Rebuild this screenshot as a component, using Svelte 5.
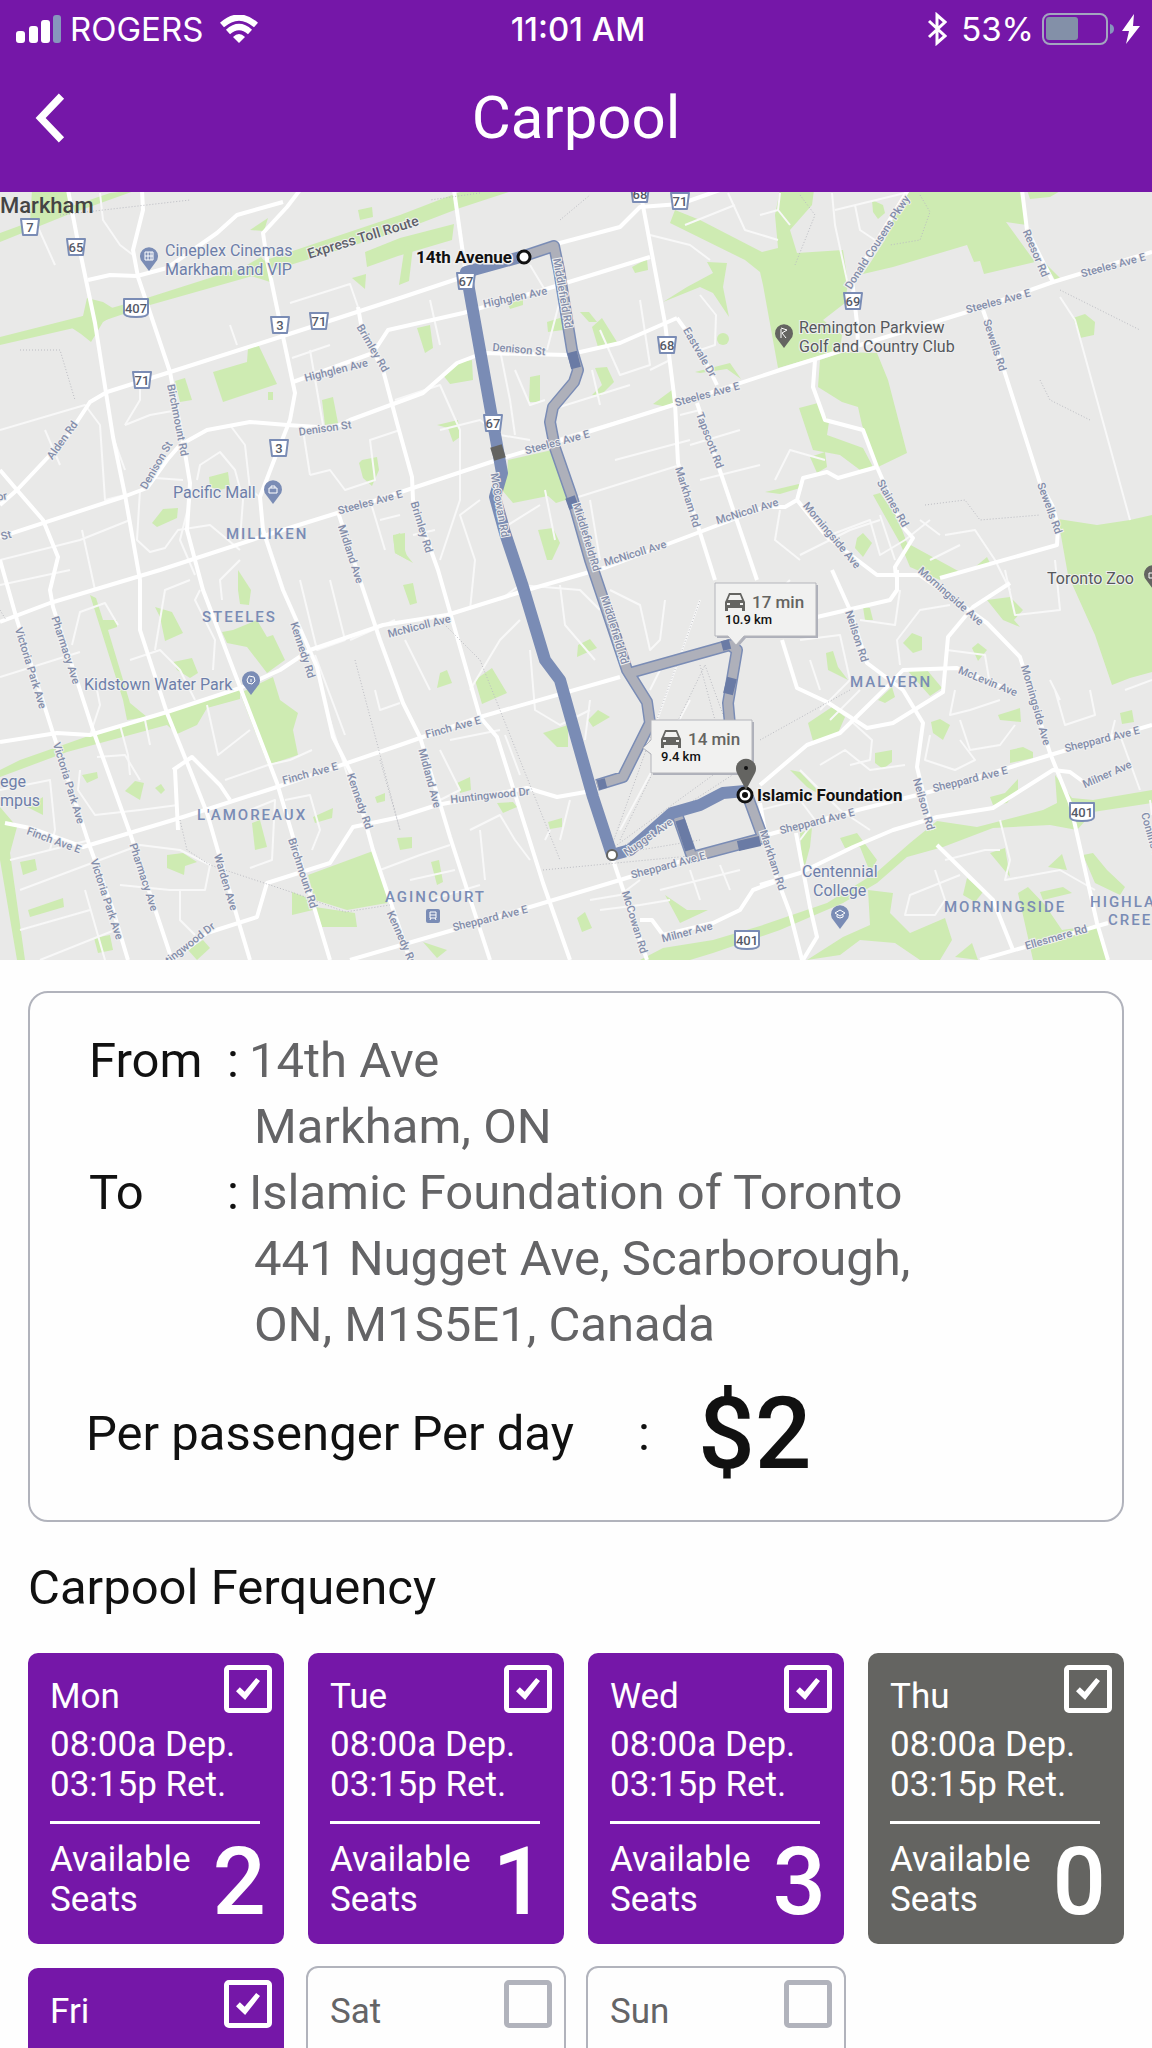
<script lang="ts">
  type Label = [text: string, x: number, y: number, angle: number]

  let days = $state([
    { name: 'Mon', checked: true, dep: '08:00a', ret: '03:15p', seats: 2 },
    { name: 'Tue', checked: true, dep: '08:00a', ret: '03:15p', seats: 1 },
    { name: 'Wed', checked: true, dep: '08:00a', ret: '03:15p', seats: 3 },
    { name: 'Thu', checked: true, dep: '08:00a', ret: '03:15p', seats: 0 },
    { name: 'Fri', checked: true },
    { name: 'Sat', checked: false },
    { name: 'Sun', checked: false }
  ])

  const stops = [
    { label: 'From', lines: ['14th Ave', 'Markham, ON'] },
    { label: 'To', lines: ['Islamic Foundation of Toronto', '441 Nugget Ave, Scarborough,', 'ON, M1S5E1, Canada'] }
  ]

  const parks = [
    'M0 233L30 222 32 190 67 190 69 207 110 193 137 190 67 215 0 242Z',
    'M0 337L87 315 150 297 260 262 400 215 465 190 515 190 460 208 400 231 274 270 150 305 100 322 0 345Z',
    'M87 298l16 4 16 10-16 10-12 20-10-8-12-8 14-10Z',
    'M247 265l14-8 12 14 0 12-12-4-20-6Z',
    'M365 252L400 238 454 224 452 240 398 256 367 267Z',
    'M405 245l8 2-4 34-10 4Z',
    'M213 372L247 362 248 348 258 344 277 384 223 402Z',
    'M175 381L185 378 192 400 180 402Z',
    'M268 392h5v8h-5Z',
    'M322 400L333 397 338 423 325 425Z',
    'M352 278L366 274 365 289Z',
    'M358 210L372 207 373 217 360 220Z',
    'M250 230L268 218 264 231Z',
    'M362 460L377 457 379 470 372 486 363 478 359 463Z',
    'M209 477L228 472 230 487 220 490 210 487Z',
    'M152 523L163 509 178 508 177 518 157 527Z',
    'M393 536L400 533 408 560 395 553Z',
    'M238 570L251 590 249 605 240 604 238 590Z',
    'M675 210L700 220 762 252 778 248 775 215 780 190 814 190 812 205 790 230 797 253 843 250 848 283 845 303 823 320 842 335 840 350 778 368 763 285 760 272 745 260 670 223Z',
    'M632 267L647 259 648 270 635 273Z',
    'M417 328L430 325 433 348 425 353Z',
    'M507 302L523 297 523 305 510 309Z',
    'M547 322L563 317 563 330 548 332Z',
    'M443 375L460 362 472 360 473 380 450 384Z',
    'M530 377L540 375 540 402 529 402Z',
    'M595 368L607 367 614 382 600 396 592 395 602 385Z',
    'M580 312l9 0 8 10-8 0Z',
    'M592 327L602 318 617 342 598 347Z',
    'M663 302L687 287 713 273 707 262 727 263 723 287 729 317 713 293 700 287Z',
    'M717 339a6 6 0 1 0 12 0a6 6 0 1 0-12 0Z',
    'M695 372L730 363 741 379 727 369 700 373Z',
    'M653 404L672 390 673 403 667 407Z',
    'M437 425L458 420 460 437 453 442 448 428Z',
    'M508 460L552 450 572 498 556 503 548 496 513 503 502 490 507 475Z',
    'M538 530L553 528 560 543 552 560 547 560Z',
    'M393 535L405 533 405 553 413 563 395 553Z',
    'M765 492L803 483 800 488 780 494Z',
    'M905 190L1020 190 1027 225 1006 222 1035 262 984 274 980 261 974 262 967 245 893 267 863 274 885 240Z',
    'M872 200L883 205 885 213 878 219 873 212Z',
    'M1027 190L1062 190 1050 197 1030 199Z',
    'M1045 263L1062 280 1055 280Z',
    'M1073 318L1085 314 1095 322 1094 335 1080 338Z',
    'M820 360L842 352 877 353 888 380 907 453 878 467 862 425 858 407 842 402 818 387Z',
    'M799 408L818 403 829 422 827 435 863 448 873 467 860 470 840 455 813 450Z',
    'M810 457L825 452 827 467 817 473Z',
    'M873 495L880 493 897 517 907 543 960 572 940 580 910 567 900 543Z',
    'M857 538L863 533 872 543 863 557 855 548Z',
    'M975 567L987 557 990 563Z',
    'M1058 519L1097 525 1130 520 1152 515 1152 672 1130 678 1112 685 1095 635 1068 575Z',
    'M987 600L1010 597 1023 610 1014 620 1020 627 1003 620Z',
    'M863 607L870 608 873 620 865 620Z',
    'M903 643L912 633 922 637 922 650 913 653Z',
    'M972 648L978 643 987 650 978 661Z',
    'M826 653L833 651 838 667 848 680 828 670Z',
    'M907 670L927 670 942 688 930 696Z',
    'M878 700L892 687 895 697 885 703Z',
    'M808 723L832 707 845 717 838 733 813 741Z',
    'M931 722L940 719 950 725 943 740 933 733Z',
    'M998 715L1020 708 1021 722 1000 720Z',
    'M875 753L892 750 892 762 883 769 875 763Z',
    'M1010 750L1023 747 1033 752 1033 758 1010 763Z',
    'M1120 713L1132 710 1134 722 1122 724Z',
    'M790 770L800 772 824 797 807 787Z',
    'M990 797L1005 793 1018 779 1018 790 1007 803 993 805Z',
    'M640 960L663 948 713 940 760 926 827 903 877 872 910 843 937 821 977 827 1043 810 1057 803 1055 775 1072 798 1093 800 1152 790 1152 803 1093 812 1077 830 1050 825 993 828 943 847 907 857 877 883 843 903 780 930 713 953 690 960Z',
    'M990 853L1005 848 1010 877Z',
    'M1048 867L1062 854 1067 870Z',
    'M1083 855L1093 853 1107 870 1125 887 1120 895 1095 883Z',
    'M963 895L967 878 983 892 975 902Z',
    'M1018 893L1028 887 1045 905 1062 930 1097 925 1107 960 1033 960Z',
    'M1040 892L1063 887 1072 893 1043 900Z',
    'M807 960L843 937 870 925 868 890 893 893 890 913 910 933 945 918 952 940 940 960 920 960 895 943 860 940 840 955Z',
    'M955 957L972 943 978 960Z',
    'M800 833L812 828 810 847 803 873Z',
    'M840 838L857 833 877 860 870 872 860 847 845 848Z',
    'M90 595L96 598 103 620 117 620 117 627 108 630 130 703 147 717 127 720 123 700Z',
    'M155 607L172 612 183 633 165 641 160 617Z',
    'M173 662L192 658 198 673 190 678 177 670Z',
    'M222 632L233 630 257 620 267 637 273 635 285 660 267 673 247 647 227 643Z',
    'M240 693L273 677 280 700 298 713 293 730 298 755 268 765Z',
    'M0 770L20 760 97 733 240 689 240 699 207 708 197 725 177 734 167 725 67 752 0 777Z',
    'M82 775L97 772 98 778 87 783Z',
    'M125 791L135 781 144 783 140 800Z',
    'M155 788l6-4 4 6-4 4Z',
    'M313 817L333 808 332 818 315 823Z',
    'M252 823L260 820 267 847 255 850Z',
    'M375 797L385 793 385 801 377 803Z',
    'M308 875L373 851 388 893 387 903 347 910 315 900Z',
    'M292 892L308 898 313 910 292 915Z',
    'M315 907L355 913 357 927 322 927Z',
    'M167 855L183 853 197 862 185 866 184 875 167 868Z',
    'M20 862L35 859 37 870 23 875Z',
    'M28 910L63 898 64 907 30 917Z',
    'M94 938L110 935 113 950 98 953Z',
    'M0 807L17 827 10 853 25 960 17 960 0 860Z',
    'M188 950L203 940 210 948 197 960Z',
    'M27 807L43 797 43 815Z',
    'M403 585L413 583 417 603 410 605Z',
    'M578 645L590 639 597 648 577 657Z',
    'M440 673L447 670 452 683 437 688Z',
    'M475 680L492 668 507 693 482 704Z',
    'M588 720L598 710 610 717 593 727Z',
    'M543 733L568 725 568 747 557 747Z',
    'M457 783L470 777 471 790 460 793Z',
    'M497 803L513 802 517 807 503 813Z',
    'M548 822L562 818 562 827 550 829Z',
    'M397 838L412 837 412 848 400 850Z',
    'M431 862L439 860 443 882 437 885Z',
    'M577 918L585 912 592 928 582 932Z',
    'M665 895L687 910 708 910 680 923Z',
    'M423 942L447 950 437 958Z'
  ]

  const majorRoads = [
    'M68 190L77 237 95 323 113 437 125 495 140 580 140 630 167 713 190 770 207 813 238 920 250 960',
    'M142 190L143 210 133 250 138 277 170 372 185 453 190 483 187 530 203 590 240 687 277 783 293 837 330 960',
    'M300 190L287 207 263 233 267 260 278 313 295 393 290 420 273 463 260 497 263 530 283 590 317 667 333 737 353 777 373 850 400 930 410 960',
    'M0 537L123 497 147 488 167 460 180 445 207 430 250 422 287 425 333 428 350 420 423 393 457 363 483 353 567 355 620 343 677 318',
    'M0 622L50 603 160 570 273 533 347 510 503 458 553 443 673 405 780 370 860 345 980 308 1053 282 1152 252',
    'M17 490L67 437 90 402 107 392 167 373 280 337 400 298 460 278 560 243 620 227 640 207 680 204 720 190',
    'M88 280L110 275 137 276 167 268 217 233 237 215 283 202',
    'M0 470L17 490 43 520 58 557 50 590 53 607 93 730 130 833 153 903 172 960',
    'M0 505L17 490',
    'M0 560L17 620 53 733 90 847 113 910 128 960',
    'M358 307L362 330 383 370 397 423 412 477 413 500 438 570 480 717 497 737 543 883 570 960',
    'M338 512L360 580 380 640 403 703 420 737 450 837 490 960',
    'M293 382L373 353 388 330 463 313 543 290 650 257',
    'M0 742L57 733 90 735 167 712 240 688 280 670 310 650 383 625 447 615 527 590 607 567 713 527 765 507 785 507 797 500 803 478 827 472 838 478 877 467',
    'M5 823L30 828 83 847 183 817 277 787 400 745 480 717 620 677',
    'M817 617L890 600 897 590 897 570',
    'M173 960L207 933 257 917 267 883 330 863 353 827 400 817 437 805 527 788 557 797 597 790',
    'M350 960L460 928 620 880 760 837 850 812 937 790 1050 755 1152 725',
    'M454 190L466 275',
    'M640 190L665 323 675 403 678 463 715 580',
    'M782 640L797 688 827 702 867 728 893 723 943 692 948 637 973 607 1010 583',
    'M760 803L770 860 790 913 802 960',
    'M677 318L700 350 717 385M697 403L757 580',
    'M815 360L813 387 825 420 863 430 877 467 887 490 903 527 913 538 895 567 896 577',
    'M797 500L827 537 877 575 920 575 987 623 1020 657 1050 753 1070 803 1097 923 1108 960',
    'M940 578L1057 545 1058 527 1053 507 1040 483 1003 367 983 310',
    'M1022 190L1027 230 1053 282',
    'M908 190L873 247 852 280 857 323 858 345',
    'M832 570L850 610 867 663 903 690 923 723 917 767 932 830M937 845L993 900 1013 950',
    'M760 785L807 745 840 733 887 687 903 670 957 668 1010 690',
    'M760 885L800 873 853 847 893 830 937 817 993 808 1053 770 1070 772 1085 783',
    'M640 920L652 920 663 935 713 923 740 910 753 890 780 880',
    'M613 860L647 960',
    'M980 960L1108 923',
    'M796 833L810 907 817 937 803 960',
    'M173 770L192 757 220 785 230 800M175 770L178 830'
  ]

  const minorRoads = [
    'M100 193L103 220 120 245 133 255M37 225L55 265',
    'M0 430L85 405 100 425 105 500 125 495M125 425L150 415 178 410',
    'M290 303L350 284 358 307M292 358L330 345M323 425L310 350M230 325L237 345',
    'M60 465L45 430M125 470L113 437M140 370L140 400 125 425',
    'M0 560L80 540 130 520M82 530L95 590M155 478L183 480M140 490L137 540 150 552 165 548 178 530 210 525 240 550',
    'M197 480L200 465 220 452 235 470 243 500 240 540M230 425L245 445 250 490 260 497',
    'M310 475L330 470 345 490 375 480 370 440 400 430M303 430L310 475M340 510L370 500 385 550',
    'M0 585L70 570M0 677L80 652M72 645L80 612 105 603 118 625M155 650L165 590 190 580',
    'M190 500L180 540 195 575M200 590L195 600 215 640 213 670M130 660L160 650 180 670 195 700',
    'M240 560L220 580 222 600M300 580L317 650 345 640 330 580M350 640L395 620',
    'M375 690L380 710 400 703M330 720L355 800M315 655L345 735',
    'M90 735L100 705 97 690M145 720L150 745M120 725L128 755 130 775',
    'M80 770L78 790 95 815 140 810 178 805M97 757L125 755 140 780M207 705L218 755 250 730',
    'M225 780L268 765 290 760 312 750M285 800L310 795 320 830 312 850',
    'M0 790L50 780 55 830 50 850M10 860L90 840M20 890L100 860 140 845 180 850 210 865 205 890 170 890 120 885',
    'M20 930L90 910M40 960L115 930M85 890L105 960M180 890L180 920 195 935M250 810L275 800 272 860 250 868',
    'M395 400L440 385 460 430 460 500 440 560M430 300L440 345M500 350L510 400 515 435',
    'M440 430L480 420 500 435 530 440M515 370L530 405 545 400M550 410L630 385M600 405L592 370',
    'M480 500L460 515 475 560 470 610M500 530L540 505M545 490L555 540M590 500L600 560',
    'M380 520L400 515M413 535L435 530M555 440L640 415M615 460L690 440',
    'M600 330L620 375 650 365 640 300M530 265L545 290M560 300L547 350',
    'M650 235L690 245 710 260M700 295L716 315 715 345 700 350M650 370L670 360M680 415L700 410',
    'M728 193L745 230 778 240M685 225L735 205M760 215L778 210M780 193L778 210 790 225',
    'M832 193L835 225 848 285M835 210L905 193M855 205L860 230 875 240',
    'M775 480L790 450 825 460M780 510L775 540 800 560M800 555L850 530 880 520M880 515L895 560',
    'M830 535L870 520 880 555 905 540 930 520M945 535L975 530 995 560 1010 590M920 520L940 535',
    'M930 560L960 545M790 580L770 600M1005 570L1015 615 1060 610 1055 560',
    'M800 640L840 635 850 680M810 660L820 690M860 620L895 625 900 590M900 665L897 640 920 610 950 605',
    'M947 650L985 655 990 685M955 690L950 715 970 710 1000 700M960 720L970 750 1000 745 1015 725',
    'M820 710L850 680M830 720L860 690M850 720L872 740 870 760 850 765M930 735L925 760 955 770 975 760 960 740',
    'M1055 690L1065 725 1095 715 1090 690M1060 700L1050 680M1110 740L1115 720M1120 735L1140 790M1125 690L1152 680',
    'M1150 800L1152 815M1000 820L1010 860 1005 880 1060 870 1095 890M945 860L985 850 1000 850M960 875L910 895 905 915 935 915 945 900 935 870',
    'M500 600L520 585 580 590 600 610M560 585L565 625 595 660M530 650L535 710 560 725 590 710',
    'M585 740L590 700M470 690L500 640 520 620M405 640L430 690M450 740L500 730M505 735L520 775',
    'M610 590L640 605 650 650 660 640 665 600M650 690L665 660',
    'M440 750L460 790 440 800M470 830L500 815 515 840 530 860M545 840L550 830M480 830L485 880M570 800L560 840',
    'M380 870L420 855 450 845M410 880L455 870M430 900L480 885M590 900L620 895 640 880M600 910L640 905 670 900',
    'M650 740L700 600M620 830L690 700M690 870L700 900M720 865L730 890M660 890L740 870',
    'M760 810L800 800 815 820 800 840M800 770L840 810 870 830M820 765L845 750 870 770 905 765',
    'M700 480L760 465M740 430L690 445M575 498L677 466M1060 297L1075 320 1130 520'
  ]

  const roadLabels: Label[] = [
    ['Brimley Rd', 373, 348, 60],
    ['Highglen Ave', 336, 370, -14],
    ['Birchmount Rd', 178, 420, 79],
    ['Alden Rd', 62, 440, -54],
    ['Denison St', 156, 465, -60],
    ['Denison St', 325, 428, -8],
    ['Steeles Ave E', 370, 502, -15],
    ['Midland Ave', 351, 554, 72],
    ['St', 6, 535, -15],
    ['or', 2, 496, -10],
    ['Highglen Ave', 515, 297, -12],
    ['Denison St', 519, 349, 5],
    ['Steeles Ave E', 557, 442, -15],
    ['Steeles Ave E', 707, 394, -15],
    ['Eastvale Dr', 700, 352, 60],
    ['Tapscott Rd', 710, 440, 69],
    ['Markham Rd', 688, 497, 73],
    ['McNicoll Ave', 635, 553, -17],
    ['McNicoll Ave', 747, 511, -17],
    ['Brimley Rd', 422, 527, 73],
    ['Middlefield Rd', 563, 293, 80],
    ['Middlefield Rd', 587, 537, 73],
    ['Middlefield Rd', 615, 630, 73],
    ['McCowan Rd', 500, 505, 80],
    ['Donald Cousens Pkwy', 877, 242, -57],
    ['Reesor Rd', 1036, 253, 67],
    ['Steeles Ave E', 998, 301, -15],
    ['Steeles Ave E', 1113, 265, -15],
    ['Sewells Rd', 995, 345, 72],
    ['Sewells Rd', 1050, 508, 70],
    ['Staines Rd', 893, 503, 60],
    ['Morningside Ave', 832, 535, 50],
    ['Morningside Ave', 951, 596, 41],
    ['Pharmacy Ave', 66, 650, 72],
    ['Pharmacy Ave', 144, 877, 72],
    ['Victoria Park Ave', 31, 668, 73],
    ['Victoria Park Ave', 69, 783, 73],
    ['Victoria Park Ave', 107, 899, 72],
    ['Kennedy Rd', 303, 650, 72],
    ['Kennedy Rd', 360, 801, 71],
    ['Kennedy Rd', 402, 938, 66],
    ['Finch Ave E', 310, 773, -15],
    ['Finch Ave E', 54, 840, 20],
    ['Warden Ave', 226, 882, 73],
    ['Birchmount Rd', 303, 873, 72],
    ['Huntingwood Dr', 182, 949, -38],
    ['McNicoll Ave', 419, 626, -14],
    ['Finch Ave E', 453, 727, -15],
    ['Midland Ave', 430, 778, 75],
    ['Huntingwood Dr', 490, 795, -6],
    ['Sheppard Ave E', 490, 918, -14],
    ['Sheppard Ave E', 668, 865, -15],
    ['McCowan Rd', 635, 922, 73],
    ['Milner Ave', 687, 932, -15],
    ['Nugget Ave', 648, 837, -35],
    ['Markham Rd', 773, 860, 72],
    ['Neilson Rd', 857, 636, 72],
    ['Neilson Rd', 924, 804, 74],
    ['Morningside Ave', 1036, 705, 74],
    ['McLevin Ave', 988, 681, 22],
    ['Sheppard Ave E', 1102, 739, -14],
    ['Sheppard Ave E', 970, 779, -14],
    ['Sheppard Ave E', 817, 821, -14],
    ['Milner Ave', 1107, 774, -24],
    ['Ellesmere Rd', 1056, 937, -16],
    ['Conlins Rd', 1152, 838, 74]
  ]

  const districts = [
    { text: 'MILLIKEN', x: 226, y: 539 },
    { text: 'STEELES', x: 202, y: 622 },
    { text: 'L\'AMOREAUX', x: 197, y: 820 },
    { text: 'AGINCOURT', x: 385, y: 902 },
    { text: 'MALVERN', x: 850, y: 687 },
    { text: 'MORNINGSIDE', x: 944, y: 912 },
    { text: 'HIGHLAND', x: 1090, y: 907 },
    { text: 'CREEK', x: 1108, y: 925 }
  ]

  const places = [
    { lines: ['Cineplex Cinemas', 'Markham and VIP'], x: 165, y: 256 },
    { lines: ['Pacific Mall'], x: 173, y: 498 },
    { lines: ['Kidstown Water Park'], x: 84, y: 690 },
    { lines: ['ege', 'mpus'], x: 0, y: 787 },
    { lines: ['Centennial'], x: 802, y: 877 },
    { lines: ['College'], x: 813, y: 896 },
    { lines: ['Remington Parkview', 'Golf and Country Club'], x: 799, y: 333, dark: true },
    { lines: ['Toronto Zoo'], x: 1047, y: 584, dark: true }
  ]

  const pins = [
    { x: 149, y: 256, glyph: 'M-4-4h8v8h-8zM-1-4v8M2-4v8M-4 0h8' },
    { x: 273, y: 489, glyph: 'M-4-1h8v5h-8zM-2-1v-2h4v2' },
    { x: 251, y: 680, glyph: 'M-4 0L-2-4 3-3 4 1 1 4-3 3ZM0-1v3' },
    { x: 840, y: 914, glyph: 'M-5-1L0-4 5-1 0 2ZM-3 1v2l3 1 3-1v-2' },
    { x: 784, y: 333, glyph: 'M-3-5L3-3-2 0 2 5M-3 5V-4', dark: true },
    { x: 1153, y: 574, glyph: 'M-4-1h8v5h-8z', dark: true }
  ]

  const shields = [
    { text: '7', x: 30, y: 227 },
    { text: '65', x: 76, y: 247 },
    { text: '407', x: 136, y: 308, wide: true },
    { text: '3', x: 280, y: 325 },
    { text: '71', x: 319, y: 321 },
    { text: '71', x: 142, y: 380 },
    { text: '3', x: 279, y: 448 },
    { text: '68', x: 640, y: 194 },
    { text: '71', x: 680, y: 201 },
    { text: '67', x: 466, y: 281 },
    { text: '67', x: 493, y: 423 },
    { text: '68', x: 667, y: 345 },
    { text: '69', x: 853, y: 301 },
    { text: '401', x: 747, y: 940, wide: true },
    { text: '401', x: 1082, y: 812, wide: true }
  ]

  const routes = [
    { x: 715, y: 583, time: '17 min', distance: '10.9 km', tip: 'M0 0H101V53H29L21 62 13 53H0Z' },
    { x: 651, y: 720, time: '14 min', distance: '9.4 km', tip: 'M0 0H101V53H0V34L-8 28 0 20Z' }
  ]
</script>

<div class="screen">
  <header>
    <div class="status">
      <div class="status-side">
        <svg class="signal" viewBox="0 0 46 28">
          <rect x="0" y="16" width="9" height="12" rx="3" />
          <rect x="13" y="11" width="9" height="17" rx="3" />
          <rect x="25" y="5" width="9" height="23" rx="3" />
          <rect class="dim" x="37" y="0" width="8" height="28" rx="3" />
        </svg>
        <span class="carrier">ROGERS</span>
        <svg class="wifi" viewBox="0 0 40 28">
          <path d="M3 10Q20-5 37 10M9 17Q20 7 31 17" />
          <path class="solid" d="M20 28L14 22Q20 16 26 22Z" />
        </svg>
      </div>
      <span class="clock">11:01 AM</span>
      <div class="status-side right">
        <svg class="bluetooth" viewBox="0 0 20 34">
          <path d="M2 9L18 24 10 31V3L18 10 2 25" />
        </svg>
        <span>53%</span>
        <svg class="battery" viewBox="0 0 72 32">
          <rect class="shell" x="1" y="1" width="64" height="30" rx="7" />
          <rect class="level" x="4" y="4" width="32" height="23" rx="3" />
          <path class="nub" d="M68 11Q72 12 72 16T68 21Z" />
        </svg>
        <svg class="bolt" viewBox="0 0 18 30">
          <path d="M12 0L0 17H7L4 30 18 12H11Z" />
        </svg>
      </div>
    </div>
    <div class="nav">
      <button class="back" aria-label="Back">
        <svg viewBox="0 0 28 48"><path d="M25 3L5 24 25 45" /></svg>
      </button>
      <h1>Carpool</h1>
    </div>
  </header>

  <svg class="map" viewBox="0 192 1152 768" role="img" aria-label="Route map">
    <rect class="land" x="0" y="190" width="1152" height="780" />
    {#each parks as d}
      <path class="park" {d} />
    {/each}
    {#each minorRoads as d}
      <path class="minor" {d} />
    {/each}
    {#each majorRoads as d}
      <path class="major" {d} />
    {/each}

    <g class="rail">
      <path d="M0 610L6 620M355 660L400 830M440 620L480 660 560 860M380 760L400 830M543 870L700 855M700 840L610 855" />
      <path d="M612 845L700 600M620 840L705 665M700 665L715 720M705 665L725 720M610 850L720 770M625 845L740 770M760 740L850 690M1060 290L1140 330" />
      <path d="M180 820L187 850 210 865 300 895 345 912 390 905M1040 380L1050 400 1090 420M925 505L965 500 980 520 1040 515" />
      <path d="M480 193L430 200M560 220L590 195M60 215L190 200M20 350L60 350 75 400M800 195L815 215 795 265M920 195L930 212 920 240 890 245" />
    </g>

    <g class="alt-route">
      {#each ['edge', 'fill'] as layer}
        <path class={layer} d="M524 256L554 246 559 270 572 350 578 370 574 382 553 407 550 422 555 448 572 497 590 560 627 670 647 702 650 723 623 777 597 785" />
        <path class={layer} d="M630 673L730 645 737 650 728 703 730 725M748 797L763 838 692 857 678 817" />
      {/each}
    </g>
    <path class="alt-dark" d="M732 678L728 694M760 841L738 846M680 820L690 850M570 497L574 508M572 352L576 368M598 785L606 783M722 646L730 644" />
    <path class="route" d="M524 256L466 272 493 423 502 473 495 497 505 533 523 587 545 660 560 680 593 797 612 855 630 850 672 813 700 805 723 793 745 791" />
    <path class="closure" d="M496 446L500 459" />

    {#each roadLabels as [text, x, y, angle]}
      <text class="road-label" transform="translate({x} {y}) rotate({angle})" dy="4">{text}</text>
    {/each}
    <text class="toll" transform="translate(363 237) rotate(-17)" dy="5">Express Toll Route</text>

    {#each districts as { text, x, y }}
      <text class="district" {x} {y}>{text}</text>
    {/each}
    <text class="city" x="0" y="213">Markham</text>

    {#each pins as { x, y, glyph, dark }}
      <g class="pin" class:dark transform="translate({x} {y})">
        <path class="drop" d="M0 15L-6 7A9 9 0 1 1 6 7Z" />
        <path class="glyph" d={glyph} />
      </g>
    {/each}
    {#each places as { lines, x, y, dark }}
      {#each lines as line, i}
        <text class="place" class:dark {x} y={y + i * 19}>{line}</text>
      {/each}
    {/each}

    <g class="station" transform="translate(426 909)">
      <rect width="14" height="14" rx="2" />
      <path d="M4 3h6v6H4zM4 6h6M4 11l1-2M10 11L9 9" />
    </g>

    {#each shields as { text, x, y, wide }}
      <g class="shield" transform="translate({x} {y})">
        <path d={wide ? 'M-12-9H12V5Q12 9 0 9T-12 5Z' : 'M-9-8H9L7 8H-7Z'} />
        <text dy="5">{text}</text>
      </g>
    {/each}

    {#each routes as { x, y, time, distance, tip }}
      <g class="bubble" transform="translate({x} {y})">
        <path class="shadow" d={tip} transform="translate(2 2)" />
        <path class="box" d={tip} />
        <path class="car" d="M14 10H26L29 17 30 19V28H27V25H13V28H10V19L11 17ZM15 12L13 17H27L25 12ZM12 20V22H15V20ZM25 20V22H28V20Z" />
        <text class="time" x="37" y="25">{time}</text>
        <text class="distance" x="10" y="41">{distance}</text>
      </g>
    {/each}

    <circle class="waypoint" cx="612" cy="855" r="5" />
    <circle class="stop" cx="524" cy="257" r="6" />
    <circle class="stop" cx="745" cy="795" r="7" />
    <circle cx="745" cy="795" r="3" />
    <path class="destination" d="M746 790L737 773A10 10 0 1 1 755 773Z" />
    <circle cx="746" cy="768" r="2" />
    <text class="stop-label" x="416" y="263">14th Avenue</text>
    <text class="stop-label" x="757" y="801">Islamic Foundation</text>
  </svg>

  <main>
    <section class="trip">
      <dl>
        {#each stops as stop}
          <dt>{stop.label}</dt>
          <dd>
            <span>:</span>
            <div>
              {#each stop.lines as line}
                <p>{line}</p>
              {/each}
            </div>
          </dd>
        {/each}
      </dl>
      <div class="price">
        <span class="price-label">Per passenger Per day</span>
        <span class="colon">:</span>
        <strong>$2</strong>
      </div>
    </section>

    <h2>Carpool Ferquency</h2>

    <div class="days">
      {#each days as day}
        <article class="day" class:off={!day.checked} class:full={day.seats === 0}>
          <label>
            <span>{day.name}</span>
            <input type="checkbox" bind:checked={day.checked}>
          </label>
          {#if day.dep}
            <p>{day.dep} Dep.<br>{day.ret} Ret.</p>
            <hr>
            <div class="seats">
              <p>Available<br>Seats</p>
              <b>{day.seats}</b>
            </div>
          {/if}
        </article>
      {/each}
    </div>
  </main>
</div>

<style>
  :global(body) {
    margin: 0;
    background: #fefefe;
  }

  .screen {
    height: 100vh;
    overflow: hidden;
    font-family: Roboto, "Liberation Sans", sans-serif;
    color: #111;
    background: #fefefe;
  }

  header {
    padding-bottom: 28px;
    background: #7517a8;
    color: #fff;
  }

  .status {
    display: grid;
    grid-template-columns: 1fr auto 1fr;
    align-items: center;
    height: 58px;
    padding: 0 12px 0 16px;
    font: 33px Inter, "Liberation Sans", sans-serif;
  }

  .status-side {
    display: flex;
    align-items: center;
    gap: 8px;
  }

  .right {
    justify-content: flex-end;
  }

  .clock {
    font-weight: 500;
  }

  .signal {
    width: 46px;
    height: 28px;
    fill: #fff;
  }

  .signal .dim {
    fill: #8796bd;
  }

  .wifi {
    width: 40px;
    height: 28px;
    margin-left: 8px;
    fill: none;
    stroke: #fff;
    stroke-width: 6;
  }

  .wifi .solid {
    fill: #fff;
    stroke: none;
  }

  .bluetooth {
    width: 20px;
    height: 34px;
    margin-right: 6px;
    fill: none;
    stroke: #fff;
    stroke-width: 3;
  }

  .battery {
    width: 72px;
    height: 32px;
  }

  .shell {
    fill: none;
    stroke: #a3a6bf;
    stroke-width: 2;
  }

  .level {
    fill: #8390a8;
  }

  .nub {
    fill: #8796bd;
  }

  .bolt {
    width: 18px;
    height: 30px;
    fill: #fff;
  }

  .nav {
    display: grid;
    grid-template-columns: 1fr auto 1fr;
    align-items: center;
    height: 106px;
    padding: 14px 34px 0;
    box-sizing: border-box;
  }

  .back {
    display: flex;
    justify-self: start;
    padding: 0;
    border: 0;
    background: none;
  }

  .back svg {
    width: 32px;
    height: 50px;
    fill: none;
    stroke: #fff;
    stroke-width: 7;
  }

  h1 {
    margin: 0;
    font-size: 60px;
    line-height: 64px;
    font-weight: 400;
  }

  .map {
    display: block;
    width: 100%;
    fill: #111;
  }

  .land {
    fill: #e9e9e8;
  }

  .park {
    fill: #ceebb2;
  }

  .major,
  .minor,
  .rail {
    fill: none;
    stroke: #fff;
    stroke-width: 4;
    stroke-linejoin: round;
  }

  .minor {
    stroke: #f8f8f8;
    stroke-width: 2;
  }

  .rail {
    stroke: #bbbcc2;
    stroke-width: 1;
    stroke-dasharray: 1 2;
  }

  .alt-route path,
  .alt-dark,
  .route,
  .closure {
    fill: none;
    stroke: #7a8cb5;
    stroke-width: 12;
    stroke-linejoin: round;
  }

  .alt-route .fill {
    stroke: #aeb0ba;
    stroke-width: 9;
  }

  .alt-dark {
    stroke: #6a7ba5;
    stroke-width: 10;
  }

  .closure {
    stroke: #646461;
  }

  .road-label,
  .toll {
    font-size: 11px;
    font-weight: 500;
    text-anchor: middle;
    fill: #838daa;
    stroke: #f0f0f0;
    stroke-width: 2;
    paint-order: stroke;
  }

  .toll {
    font-size: 14px;
    fill: #5d6069;
  }

  .district {
    font-size: 15px;
    font-weight: 500;
    letter-spacing: 2px;
    fill: #7a8cb5;
  }

  .city {
    font-size: 22px;
    font-weight: 500;
    fill: #444;
  }

  .place {
    font-size: 16px;
    fill: #6d7ea9;
    stroke: #f0f0f0;
    stroke-width: 2;
    paint-order: stroke;
  }

  .place.dark {
    fill: #55585c;
  }

  .drop {
    fill: #7a8cb5;
  }

  .dark .drop,
  .destination {
    fill: #646461;
  }

  .glyph {
    fill: none;
    stroke: #fff;
    stroke-width: 1;
  }

  .station rect {
    fill: #7a8cb5;
  }

  .station path {
    fill: none;
    stroke: #fff;
  }

  .shield path {
    fill: #fff;
    stroke: #7a8cb5;
    stroke-width: 2;
    stroke-linejoin: round;
  }

  .shield text {
    font-size: 13px;
    font-weight: 500;
    text-anchor: middle;
    fill: #555a68;
  }

  .shadow {
    fill: #aeb0ba;
  }

  .box {
    fill: #f1f1f0;
    stroke: #b4b5bb;
  }

  .car {
    fill: #646461;
    fill-rule: evenodd;
  }

  .time {
    font-size: 17px;
    font-weight: 500;
    fill: #646461;
  }

  .distance {
    font-size: 13px;
    font-weight: 500;
  }

  .waypoint {
    fill: #fff;
    stroke: #646461;
    stroke-width: 2;
  }

  .stop {
    fill: #fff;
    stroke: #111;
    stroke-width: 3;
  }

  .stop-label {
    font-size: 17px;
    font-weight: 700;
    stroke: #f0f0f0;
    stroke-width: 3;
    paint-order: stroke;
  }

  main {
    padding: 31px 28px 0;
  }

  p {
    margin: 0;
  }

  .trip {
    padding: 35px 56px 20px;
    border: 2px solid #b1b3bc;
    border-radius: 20px;
    font-size: 49px;
    line-height: 66px;
  }

  dl {
    display: grid;
    grid-template-columns: 138px 1fr;
    margin: 0;
    padding-left: 3px;
  }

  dd {
    display: flex;
    gap: 10px;
    margin: 0;
  }

  dd div {
    color: #646466;
  }

  dd p + p {
    padding-left: 5px;
  }

  .price {
    display: flex;
    align-items: center;
    height: 132px;
    margin-top: 10px;
  }

  .price-label {
    width: 552px;
  }

  .colon {
    width: 60px;
  }

  strong {
    font-size: 100px;
    font-weight: 500;
  }

  h2 {
    margin: 33px 0 32px;
    font-size: 49px;
    line-height: 66px;
    font-weight: 400;
  }

  .days {
    display: grid;
    grid-template-columns: repeat(4, 1fr);
    gap: 24px;
  }

  .day {
    min-height: 291px;
    padding: 12px 12px 0 22px;
    border-radius: 10px;
    box-sizing: border-box;
    background: #7517a8;
    color: #fff;
    font-size: 35px;
    line-height: 40px;
  }

  .day.full {
    background: #646461;
  }

  .day.off {
    background: #fefefe;
    color: #646466;
    outline: 2px solid #b1b3bc;
  }

  label {
    display: flex;
    justify-content: space-between;
    margin-bottom: 8px;
  }

  label span {
    padding-top: 12px;
  }

  input {
    display: grid;
    place-items: center;
    width: 48px;
    height: 48px;
    margin: 0;
    border: 5px solid #fff;
    border-radius: 5px;
    box-sizing: border-box;
    appearance: none;
  }

  input:checked::before {
    content: "";
    width: 24px;
    height: 22px;
    background: #fff;
    clip-path: polygon(0 60%, 16% 42%, 36% 62%, 84% 0, 100% 14%, 38% 100%);
  }

  .off input {
    border-color: #b1b3bc;
  }

  hr {
    height: 3px;
    margin: 16px 12px 16px 0;
    border: 0;
    background: #fff;
  }

  .seats {
    display: flex;
    justify-content: space-between;
    padding-right: 6px;
  }

  .seats b {
    font-size: 94px;
    line-height: 84px;
    font-weight: 500;
  }
</style>
